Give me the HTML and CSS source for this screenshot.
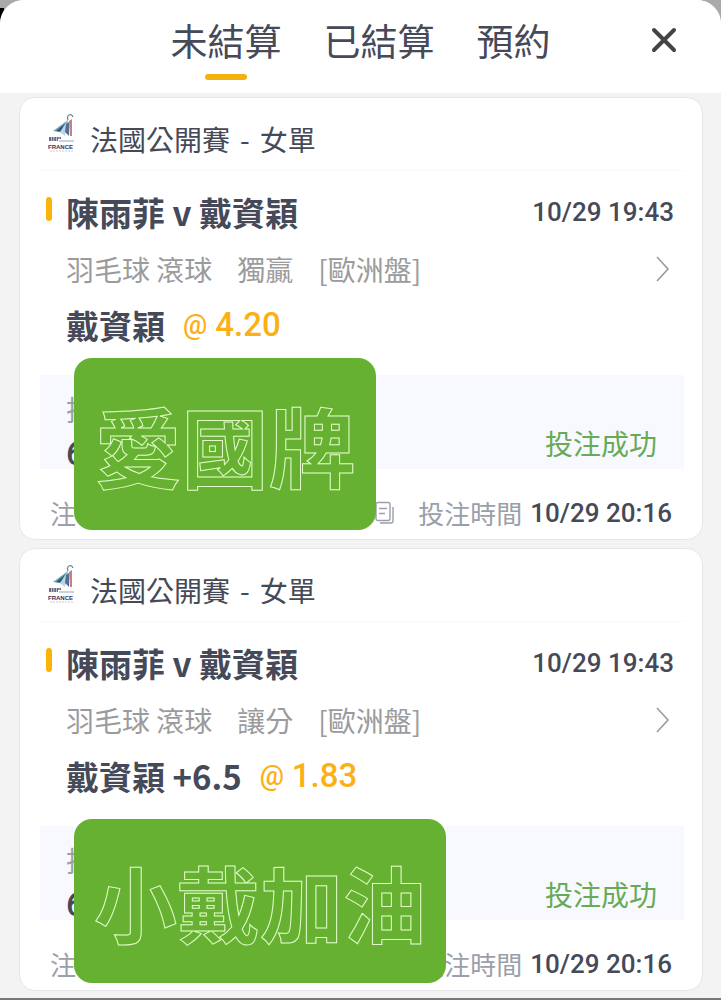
FILE: index.html
```html
<!DOCTYPE html>
<html lang="zh-Hant">

<head>
  <meta charset="UTF-8">
  <meta name="viewport" content="width=device-width, initial-scale=1.0">
  <title>未結算</title>

  <link rel="stylesheet" href="styles.css">
</head>

<body>
  <!-- shared drawings -->
  <svg class="defs" width="0" height="0" aria-hidden="true">
    <symbol id="logo" viewBox="0 0 28 38">
      <path d="M5 17 L20 6 L17 19 Z" fill="#6fa5bd" />
      <path d="M8 17 L19 8 L15 18 Z" fill="#2d5874" />
      <path d="M12 18 L19 7 L17 22 Z" fill="#b9d5df" />
      <path d="M21 7 L24 5 L24 22 L22 22 Z" fill="#c77f83" />
      <path d="M18 10 L21 8 L21 22 L17 18 Z" fill="#536d9b" />
      <path d="M20 6 C18 0 24 -1 25 3" fill="none" stroke="#6b8796" stroke-width="1.2" />
      <path d="M1 24h12M1 26h9" stroke="#38385f" stroke-width="1.5" stroke-dasharray="2 .6" />
      <path d="M11 27h15" stroke="#93a5bc" stroke-width="1" />
      <path d="M2 37h24" stroke="#c9c9d2" stroke-width="1" stroke-dasharray="2 1" />
    </symbol>
    <symbol id="chevron" viewBox="0 0 14 26">
      <path d="M1 1 L12 13 L1 25" fill="none" stroke="currentColor" stroke-width="1.6" />
    </symbol>
    <symbol id="copy" viewBox="0 0 20 24">
      <path d="M3 1.5h10q2 0 2 2v14q0 2-2 2H3q-2 0-2-2v-14q0-2 2-2zM4 7.5h8M4 12.5h6M18 6v14q0 2-2 2H5" fill="none" stroke="currentColor" stroke-width="1.4" />
    </symbol>
  </svg>

  <main class="sheet">
    <header class="top">
      <nav class="tabs">
        <button class="tab active">未結算</button>
        <button class="tab">已結算</button>
        <button class="tab">預約</button>
      </nav>
      <button class="close" aria-label="關閉">
        <svg width="26" height="26" viewBox="0 0 26 26">
          <path d="M3 3 L23 23 M23 3 L3 23" stroke="currentColor" stroke-width="4" stroke-linecap="round" />
        </svg>
      </button>
    </header>

    <section class="bets">
      <article class="card">
        <div class="league">
          <svg class="logo" width="28" height="38"><use href="#logo" /><text x="0" y="35">FRANCE</text></svg>
          <p class="event"><span>法國公開賽</span><span>-</span><span>女單</span></p>
        </div>
        <div class="match">
          <h2>陳雨菲 v 戴資穎</h2>
          <time>10/29 19:43</time>
        </div>
        <div class="market">
          <span>羽毛球 滾球</span>
          <span>獨贏</span>
          <span>[歐洲盤]</span>
          <button class="more" aria-label="詳情"><svg width="14" height="26"><use href="#chevron" /></svg></button>
        </div>
        <div class="pick">
          <strong>戴資穎</strong>
          <span class="odds"><span class="at">@</span>4.20</span>
        </div>
        <div class="stake">
          <div>
            <p class="label">投</p>
            <p class="amount">6</p>
          </div>
          <span class="status">投注成功</span>
        </div>
        <div class="foot">
          <span>注</span>
          <button class="copy" aria-label="複製"><svg width="20" height="24"><use href="#copy" /></svg></button>
          <span>投注時間</span>
          <time>10/29 20:16</time>
        </div>
        <div class="sticker sticker-brand">愛國牌</div>
      </article>

      <article class="card">
        <div class="league">
          <svg class="logo" width="28" height="38"><use href="#logo" /><text x="0" y="35">FRANCE</text></svg>
          <p class="event"><span>法國公開賽</span><span>-</span><span>女單</span></p>
        </div>
        <div class="match">
          <h2>陳雨菲 v 戴資穎</h2>
          <time>10/29 19:43</time>
        </div>
        <div class="market">
          <span>羽毛球 滾球</span>
          <span>讓分</span>
          <span>[歐洲盤]</span>
          <button class="more" aria-label="詳情"><svg width="14" height="26"><use href="#chevron" /></svg></button>
        </div>
        <div class="pick">
          <strong>戴資穎 +6.5</strong>
          <span class="odds"><span class="at">@</span>1.83</span>
        </div>
        <div class="stake">
          <div>
            <p class="label">投</p>
            <p class="amount">6</p>
          </div>
          <span class="status">投注成功</span>
        </div>
        <div class="foot">
          <span>注</span>
          <button class="copy" aria-label="複製"><svg width="20" height="24"><use href="#copy" /></svg></button>
          <span>投注時間</span>
          <time>10/29 20:16</time>
        </div>
        <div class="sticker sticker-cheer">小戴加油</div>
      </article>
    </section>
  </main>
</body>

</html>
```
FILE: styles.css
```css
* {
  box-sizing: border-box;
}

body {
  background: linear-gradient(#aaa 8px, #000 8px, #000 24px, #aaa 24px) left top / 4px 60px no-repeat, #aaa;
  color: #454958;
  font-family: "Noto Sans CJK TC", sans-serif;
  font-size: 28px;
  margin: 0;
}

h2,
p {
  margin: 0;
}

button {
  background: none;
  border: 0;
  color: inherit;
  cursor: pointer;
  font: inherit;
  padding: 0;
}

svg {
  display: block;
}

.defs {
  position: absolute;
}

.sheet {
  background: #f3f3f4;
  border-bottom: 2px solid #77777b;
  border-radius: 24px 24px 0 0;
  overflow: hidden;
}

.top {
  background: #fff;
  height: 93px;
  position: relative;
}

.tabs {
  display: flex;
  gap: 42px;
  justify-content: center;
}

.tab {
  font-size: 37px;
  line-height: 48px;
  padding-top: 16px;
}

.tab.active::after {
  background: #f3b210;
  border-radius: 3px;
  content: "";
  display: block;
  height: 6px;
  margin: 10px auto 0;
  width: 42px;
}

.tab:not(.active) {
  padding-bottom: 16px;
}

.close {
  color: #444;
  position: absolute;
  right: 44px;
  top: 27px;
}

.bets {
  display: flex;
  flex-direction: column;
  gap: 8px;
  padding: 4px 18px 7px 19px;
}

.card {
  background: #fff;
  border: 1px solid #e6e6e8;
  border-radius: 16px;
  padding: 0 18px 6px 20px;
  position: relative;
}

.league {
  align-items: center;
  border-bottom: 1px solid #f9f9fa;
  display: flex;
  gap: 14px;
  line-height: 56px;
  padding: 13px 0 3px 8px;
}

.logo {
  margin-bottom: 12px;
}

.logo text {
  fill: #30315b;
  font: bold 6px "Liberation Sans", sans-serif;
}

.event {
  display: flex;
  gap: 10px;
}

.match {
  align-items: center;
  display: flex;
  justify-content: space-between;
  line-height: 48px;
  margin-top: 17px;
  padding: 0 10px 0 6px;
}

.match h2 {
  align-items: center;
  display: flex;
  font-size: 33px;
}

.match h2::before {
  background: #fbb40b;
  border-radius: 4px;
  content: "";
  height: 24px;
  margin: 0 14px 6px 0;
  width: 6px;
}

time {
  font-family: Roboto, sans-serif;
  font-size: 26px;
  font-weight: 500;
}

.market {
  align-items: center;
  color: #9b9b9d;
  display: flex;
  gap: 25px;
  line-height: 40px;
  margin-top: 13px;
  padding: 0 14px 0 26px;
}

.more {
  margin-left: auto;
}

.pick {
  display: flex;
  font-size: 33px;
  gap: 18px;
  line-height: 48px;
  margin-top: 12px;
  padding-left: 26px;
}

.odds {
  align-items: center;
  color: #fbb116;
  display: flex;
  font-family: Roboto, sans-serif;
  font-size: 33px;
  font-weight: 500;
  gap: 8px;
}

.at {
  font-size: 27px;
}

.stake {
  align-items: flex-end;
  background: #f8f9fe;
  display: flex;
  justify-content: space-between;
  line-height: 40px;
  margin-top: 26px;
  padding: 14px 27px 0 26px;
}

.label,
.foot {
  color: #9a9faa;
}

.amount {
  font-family: Roboto, sans-serif;
  font-size: 33px;
  font-weight: 500;
  line-height: 30px;
  margin-top: 10px;
}

.status {
  color: #67aa58;
  padding-bottom: 6px;
}

.foot {
  align-items: center;
  display: flex;
  font-size: 26px;
  line-height: 40px;
  margin-top: 24px;
  padding: 0 12px 0 10px;
}

.copy {
  margin: 0 23px 0 auto;
}

.foot time {
  color: #454958;
  margin-left: 8px;
}

/* stickers lie over the stake details */
.sticker {
  -webkit-text-stroke: 1px #e2fbc8;
  background: #66b132;
  border-radius: 18px;
  color: transparent;
  font-weight: bold;
  left: 54px;
  position: absolute;
  text-align: center;
}

.sticker-brand {
  font-size: 87px;
  line-height: 172px;
  top: 260px;
  width: 302px;
}

.sticker-cheer {
  font-size: 83px;
  line-height: 164px;
  top: 270px;
  width: 372px;
}
```
